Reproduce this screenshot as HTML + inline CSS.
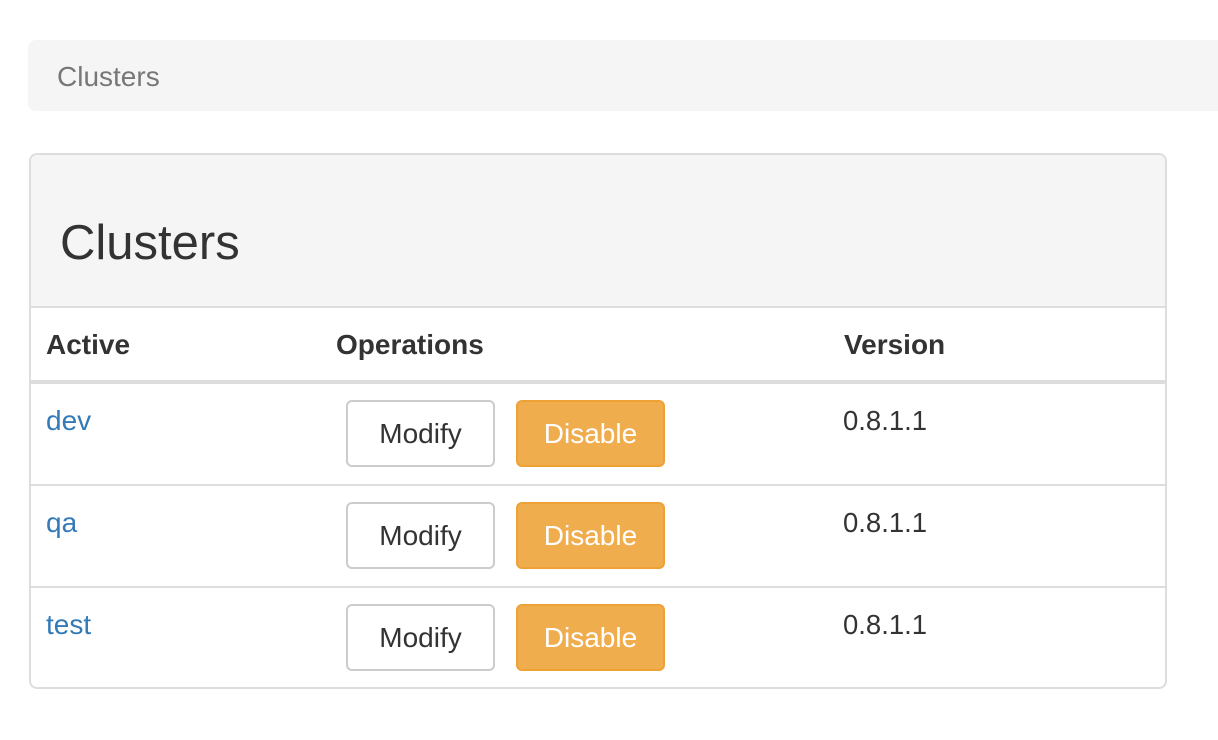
<!DOCTYPE html>
<html><head><style>
body{margin:0;width:1218px;height:740px;background:#fff;font-family:"Liberation Sans",Arial,sans-serif;color:#333;position:relative;overflow:hidden}
.a{position:absolute;white-space:nowrap}
.bc{left:28px;top:40px;width:1210px;height:71px;background:#f5f5f5;border-radius:8px}
.panel{left:29px;top:153px;width:1134px;height:532px;border:2px solid #ddd;border-radius:8px;box-sizing:content-box;overflow:hidden}
.ph{left:0;top:0;width:1134px;height:151px;background:#f5f5f5;border-bottom:2px solid #ddd}
.hline{left:0;width:1134px;height:0}
.th{font-weight:bold;font-size:28px;top:174px}
.btn{width:145px;height:63px;border-radius:6px;font-size:28px;text-align:center;line-height:63px}
.m{border:2px solid #ccc;background:#fff;color:#333}
.d{border:2px solid #eea236;background:#f0ad4e;color:#fff}
.lk{color:#337ab7;font-size:28px}
.v{font-size:27.5px}
</style></head><body>
<div class="a bc"></div>
<div class="a" style="left:57px;top:61px;font-size:28px;color:#777">Clusters</div>
<div class="a panel">
 <div class="a ph"></div>
 <div class="a" style="left:29px;top:60px;font-size:49px;color:#333">Clusters</div>
 <div class="a th" style="left:15px">Active</div>
 <div class="a th" style="left:305px">Operations</div>
 <div class="a th" style="left:813px">Version</div>
 <div class="a hline" style="top:225px;border-top:4px solid #ddd"></div>
 <div class="a hline" style="top:329px;border-top:2px solid #ddd"></div>
 <div class="a hline" style="top:431px;border-top:2px solid #ddd"></div>

 <div class="a lk" style="left:15px;top:250px">dev</div>
 <div class="a btn m" style="left:315px;top:245px">Modify</div>
 <div class="a btn d" style="left:485px;top:245px">Disable</div>
 <div class="a v" style="left:812px;top:250px">0.8.1.1</div>

 <div class="a lk" style="left:15px;top:352px">qa</div>
 <div class="a btn m" style="left:315px;top:347px">Modify</div>
 <div class="a btn d" style="left:485px;top:347px">Disable</div>
 <div class="a v" style="left:812px;top:352px">0.8.1.1</div>

 <div class="a lk" style="left:15px;top:454px">test</div>
 <div class="a btn m" style="left:315px;top:449px">Modify</div>
 <div class="a btn d" style="left:485px;top:449px">Disable</div>
 <div class="a v" style="left:812px;top:454px">0.8.1.1</div>
</div>
</body></html>
